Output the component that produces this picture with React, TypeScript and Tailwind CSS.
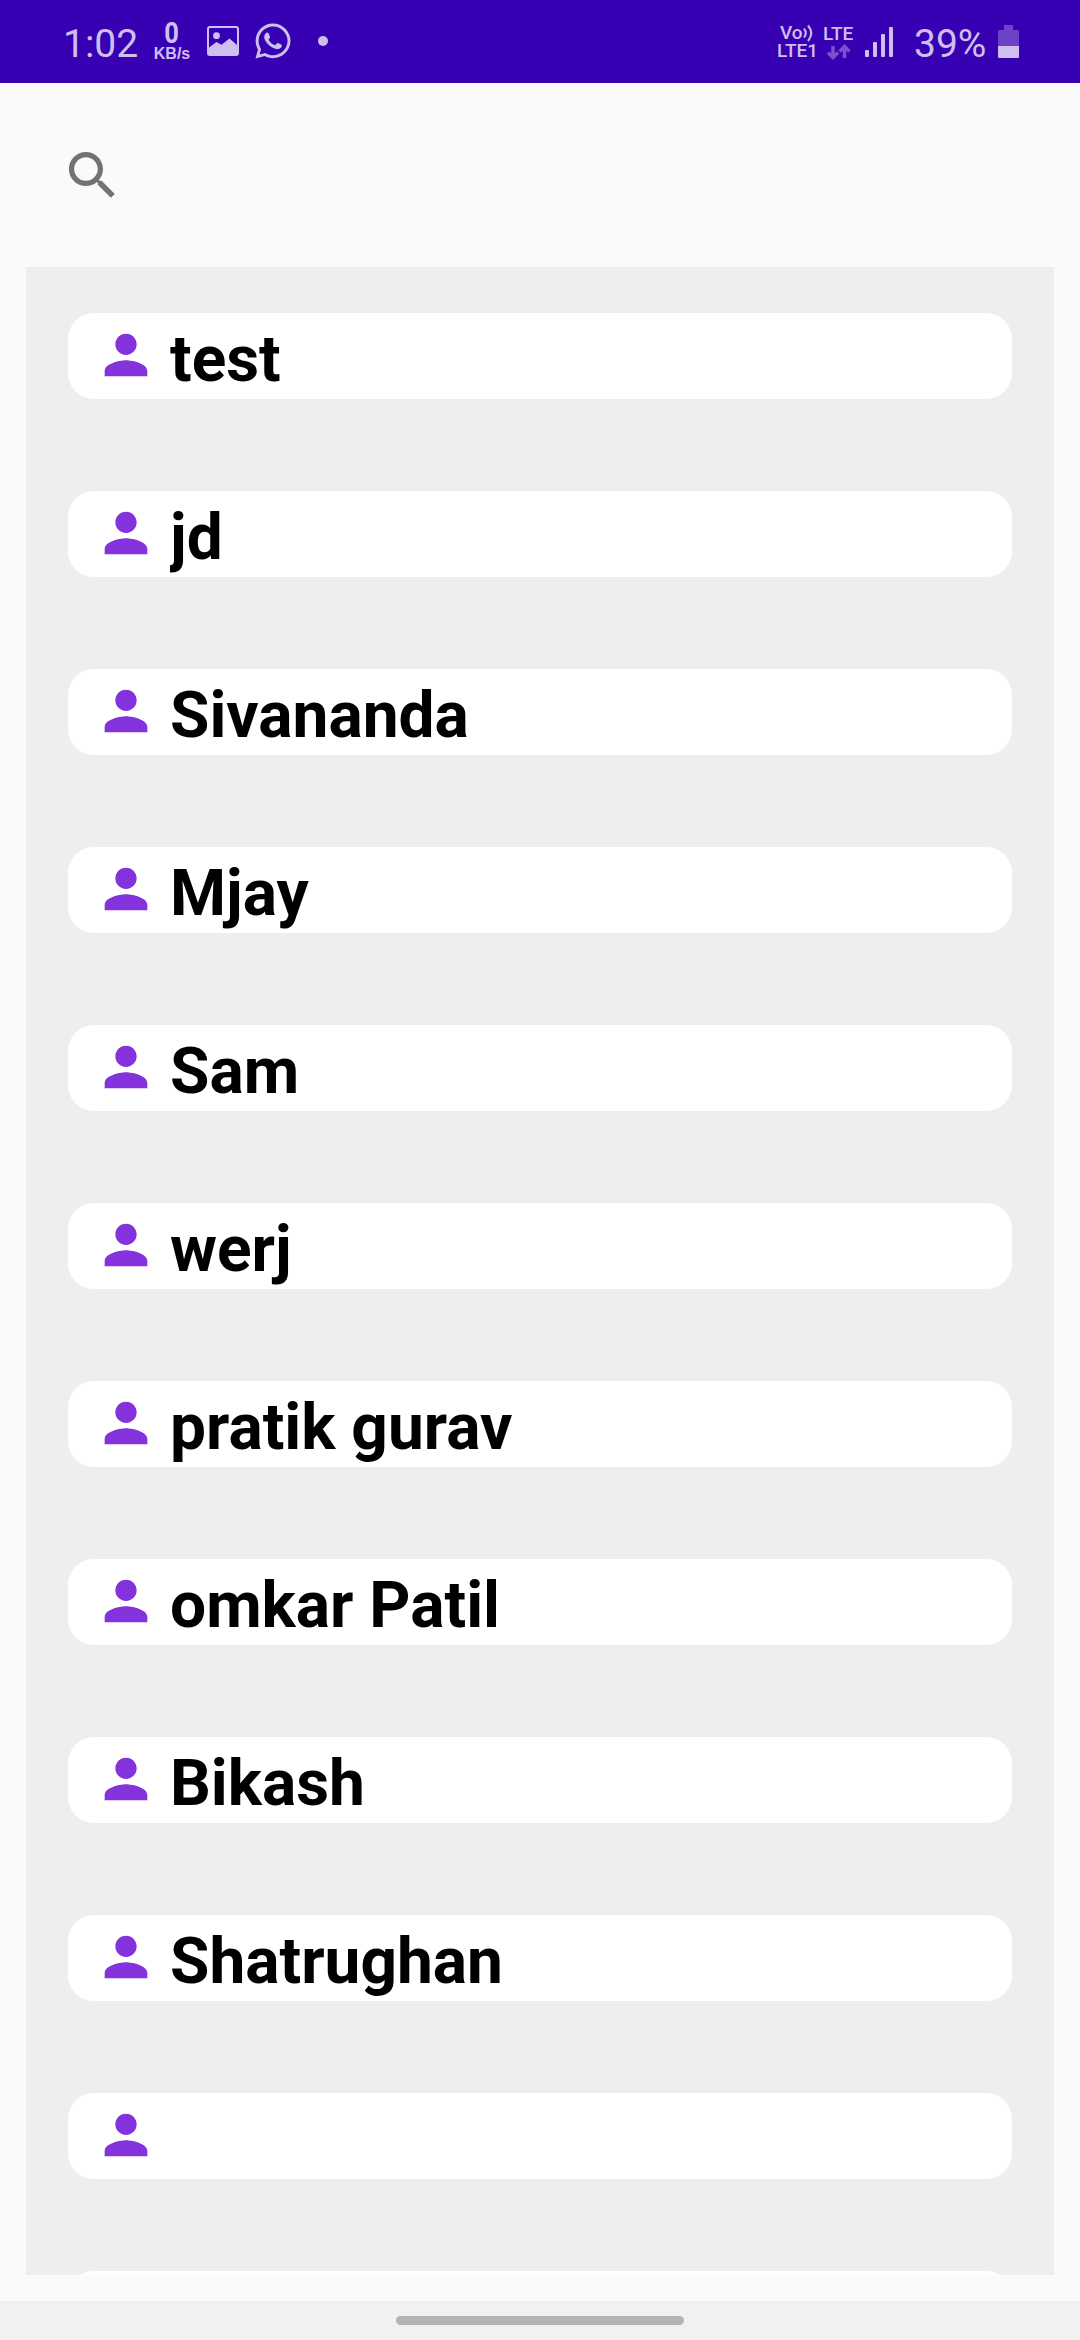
import React from "react";
import { FaWhatsapp } from "react-icons/fa";

const contacts = [
  "test",
  "jd",
  "Sivananda",
  "Mjay",
  "Sam",
  "werj",
  "pratik gurav",
  "omkar Patil",
  "Bikash",
  "Shatrughan",
  "",
  "",
];

function StatusBar() {
  return (
    <header className="flex h-[83px] shrink-0 items-start bg-[#3700b3] text-[#cfbff0]">
      <span className="ml-[63px] mt-[21px] w-[77px] whitespace-nowrap text-[39px] leading-[46px]">1:02</span>
      <div className="ml-[12px] mt-[18px] flex w-[40px] flex-col items-center font-bold">
        <span className="h-[28px] scale-x-[0.85] text-[30px] leading-[29px]">0</span>
        <span className="font-['Liberation_Sans'] text-[16px] leading-[16px]">KB/s</span>
      </div>
      <svg className="ml-[15px] mt-[26px]" width="32" height="30" viewBox="0 0 32 30">
        <rect x="1" y="1" width="30" height="28" rx="2" fill="none" stroke="currentColor" strokeWidth="2" />
        <circle cx="9.500" cy="9.700" r="3.400" fill="currentColor" />
        <path d="M2 21.500 9.500 16 14.500 18.700 22.500 12.500 30 19V29H2Z" fill="currentColor" />
      </svg>
      <FaWhatsapp className="ml-[14px] mt-[21px] size-[40px]" />
      <span className="ml-[25px] mt-[36px] size-[10px] rounded-full bg-current" />
      <div className="ml-auto mt-[24px] flex w-[40px] flex-col">
        <div className="flex h-[18px] items-start pl-[3px]">
          <span className="text-[19px] font-medium leading-[18px]">Vo</span>
          <svg width="11" height="18" viewBox="0 0 11 18" fill="none" stroke="currentColor" strokeWidth="2">
            <path d="M1 4.500Q4.500 9 1 13.500M5 1.500Q11.500 9 5 17" />
          </svg>
        </div>
        <span className="whitespace-nowrap text-[19px] font-medium leading-[18px]">LTE1</span>
      </div>
      <div className="ml-[6px] mt-[24px] flex w-[32px] flex-col">
        <span className="text-[19px] font-medium leading-[20px]">LTE</span>
        <svg className="ml-[4px] text-[#7a4fd0]" width="24" height="16" viewBox="0 0 24 16" fill="none" stroke="currentColor" strokeWidth="3.500">
          <path d="M6 2V13M1 8.500 6 13.500 11 8.500M17.500 14V3M12.500 7.500 17.500 2.500 22.500 7.500" />
        </svg>
      </div>
      <svg className="ml-[10px] mt-[27px]" width="28" height="31" viewBox="0 0 28 31" fill="currentColor">
        <rect x="0" y="23" width="4" height="7" rx="1" />
        <rect x="8" y="15" width="4" height="15" rx="1" />
        <rect x="16" y="7" width="4" height="23" rx="1" />
        <rect x="24" y="0" width="4" height="30" rx="1" />
      </svg>
      <span className="ml-[21px] mt-[21px] w-[72px] whitespace-nowrap text-[39px] leading-[46px]">39%</span>
      <svg className="ml-[12px] mr-[61px] mt-[25px]" width="21" height="33" viewBox="0 0 21 33">
        <path d="M6 0H15V5H19.500Q21 5 21 6.500V21H0V6.500Q0 5 1.500 5H6Z" fill="#6d42c8" />
        <path d="M0 21H21V31.500Q21 33 19.500 33H1.500Q0 33 0 31.500Z" fill="currentColor" />
      </svg>
    </header>
  );
}

function SearchIcon() {
  return (
    <svg className="size-[63px] text-[#737373]" viewBox="0 0 24 24" fill="currentColor">
      <path d="M15.500 14h-.79l-.28-.27C15.410 12.590 16 11.110 16 9.500 16 5.910 13.090 3 9.500 3S3 5.910 3 9.500 5.910 16 9.500 16c1.610 0 3.090-.59 4.230-1.570l.27.28v.79l5 4.990L20.490 19l-4.990-5zm-6 0C7.010 14 5 11.990 5 9.500S7.010 5 9.500 5 14 7.010 14 9.500 11.990 14 9.500 14z" />
    </svg>
  );
}

function PersonIcon() {
  return (
    <svg className="size-[64px] shrink-0 text-[#8332dc]" viewBox="0 0 24 24" fill="currentColor">
      <path d="M12 12c2.210 0 4-1.790 4-4s-1.790-4-4-4-4 1.790-4 4 1.790 4 4 4zm0 2c-2.670 0-8 1.340-8 4v2h16v-2c0-2.660-5.330-4-8-4z" />
    </svg>
  );
}

function ContactCard({ name }: { name: string }) {
  return (
    <li className="flex h-[86px] shrink-0 items-start rounded-[26px] bg-white pl-[25.5px]">
      <div className="mt-[10px]">
        <PersonIcon />
      </div>
      <span className="ml-[12.5px] mt-[9px] overflow-hidden whitespace-nowrap text-[64px] font-bold leading-[76px] text-black">
        {name}
      </span>
    </li>
  );
}

export default function App() {
  return (
    <div className="flex h-[2340px] w-[1080px] flex-col overflow-hidden bg-[#fafafa] font-[Roboto,sans-serif]">
      <StatusBar />
      <div className="flex h-[184px] shrink-0 items-start pl-[61px] pt-[61px]">
        <SearchIcon />
      </div>
      <ul className="mx-[26px] flex h-[2008px] shrink-0 flex-col gap-[92px] overflow-hidden bg-[#eeeeee] px-[42px] pt-[46px]">
        {contacts.map((name, i) => (
          <ContactCard key={i} name={name} />
        ))}
      </ul>
      <nav className="mt-[26px] flex h-[39px] shrink-0 justify-center bg-[#f1f1f1] pt-[15px]">
        <span className="h-[9px] w-[288px] rounded-full bg-[#b4b4b4]" />
      </nav>
    </div>
  );
}
